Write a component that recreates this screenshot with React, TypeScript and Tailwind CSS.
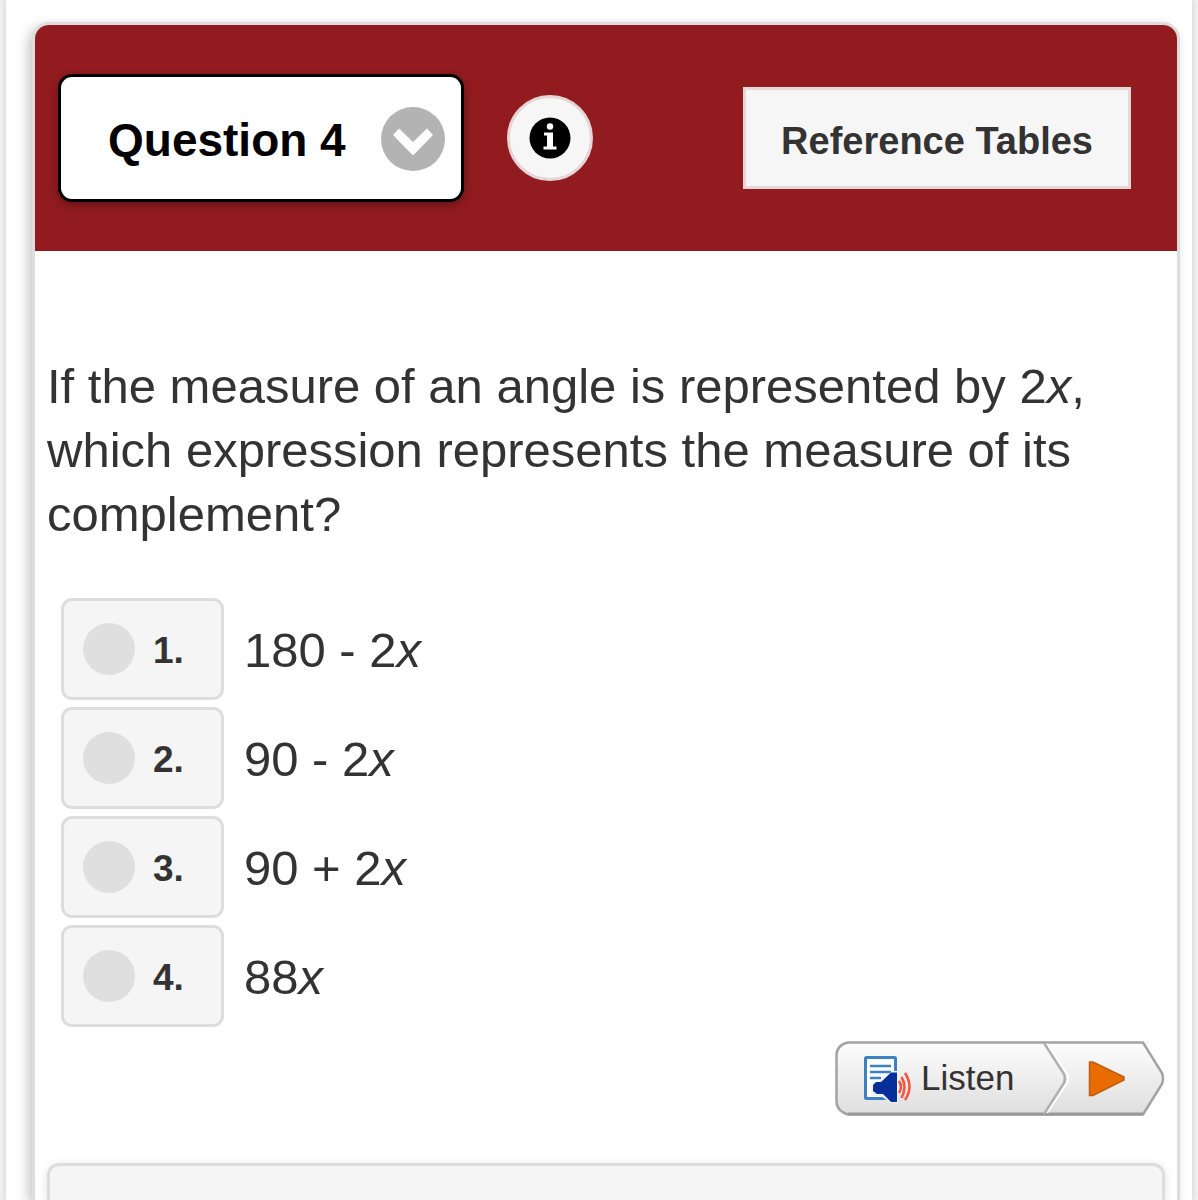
import { useState } from "react";

type Choice = { id: string; label: string; variable: string };

const CHOICES: Choice[] = [
  { id: "1", label: "180 - 2", variable: "x" },
  { id: "2", label: "90 - 2", variable: "x" },
  { id: "3", label: "90 + 2", variable: "x" },
  { id: "4", label: "88", variable: "x" },
];

function InfoIcon() {
  return (
    <svg width="42" height="42" viewBox="0 0 42 42">
      <circle cx="21" cy="21" r="20.500" fill="#000" />
      <circle cx="21" cy="9.500" r="3.200" fill="#fff" />
      <path d="M15 15.500H24V29.500H27.500V32.500H14.500V29.500H18V18.500H15z" fill="#fff" />
    </svg>
  );
}

function QuestionSelect() {
  return (
    <div className="relative">
      <select
        aria-label="Question"
        defaultValue="Question 4"
        className="h-[128px] w-[406px] appearance-none rounded-[14px] border-[3px] border-black bg-white pt-1 pr-28 pl-[47px] text-[46px] font-bold text-black shadow-[0_3px_8px_rgba(0,0,0,0.3)]"
      >
        <option>Question 4</option>
      </select>
      <svg
        viewBox="0 0 64 64"
        className="pointer-events-none absolute top-[33px] right-[19px] h-16 w-16"
      >
        <circle cx="32" cy="32" r="32" fill="#b3b3b3" />
        <path d="M12 28 18 21.500 32 35 46 21.500 52 28 32 48.500z" fill="#fff" />
      </svg>
    </div>
  );
}

function ListenBar() {
  return (
    <div className="relative flex h-[75px] w-[330px] items-stretch">
      <svg viewBox="0 0 330 75" fill="none" className="absolute inset-0 h-full w-full">
        <defs>
          <linearGradient id="bar" x1="0" y1="0" x2="0" y2="1">
            <stop offset="0" stopColor="#fdfdfd" />
            <stop offset="1" stopColor="#dedede" />
          </linearGradient>
        </defs>
        <path
          d="M13 1.500H308L327 32Q329 37.500 327 43L308 73.500H13Q1.500 70 1.500 60V15Q1.500 4 13 1.500z"
          fill="url(#bar)"
          stroke="#a3a3a3"
          strokeWidth="2.500"
        />
        <path d="M13 73H308" stroke="#999" strokeWidth="3" />
        <path d="M212 3 232 33Q234 37.500 232 42L212 72" stroke="#fff" strokeWidth="2" />
        <path d="M209 2 229 33Q231 37.500 229 42L209 73" stroke="#b0b0b0" strokeWidth="2.500" />
      </svg>
      <a
        href="#listen"
        className="relative flex w-[220px] items-center gap-2 pl-7 text-[35px] text-[#333]"
      >
        <svg width="50" height="50" viewBox="0 0 50 50" fill="none" className="shrink-0">
          <rect x="2.500" y="3.500" width="30" height="41" rx="1" fill="#fff" stroke="#3d80c4" strokeWidth="3" />
          <path d="M7 12H28M7 18H28M7 24H18" stroke="#3d80c4" strokeWidth="2.500" />
          <path d="M8 28H18L29 17H35V49H28L18 42H8z" fill="#f3f3f3" />
          <path d="M10 31 13 28H18L28 18.500H34V48H28L20 40H14L10 37z" fill="#062f99" />
          <path d="M36 27Q40 33 36 39M38.500 23Q44.500 33 38.500 44M42 19Q51 33 42 46" stroke="#f5553a" strokeWidth="2.500" />
        </svg>
        Listen
      </a>
      <button type="button" aria-label="Play" className="relative flex-1 pl-8">
        <svg width="38" height="38" viewBox="0 0 38 38">
          <path d="M2.500 2H6L37 17V20L6 35.500H2.500z" fill="#e86c00" stroke="#bd5d14" strokeWidth="1.500" />
        </svg>
      </button>
    </div>
  );
}

export default function App() {
  const [answer, setAnswer] = useState<string | null>(null);

  return (
    <div className="flex h-screen overflow-hidden bg-[#f2f2f2] px-[6px] font-['Liberation_Sans',Arial,sans-serif] text-[#333]">
      <div className="flex min-w-0 flex-1 bg-white pt-[22px] pr-3 pl-[26px] shadow-[0_0_6px_1px_rgba(0,0,0,0.12)]">
        <main className="flex min-w-0 flex-1 flex-col rounded-t-[17px] border-[3px] border-b-0 border-[#ddd] bg-white shadow-[-4px_4px_12px_rgba(0,0,0,0.22)]">
          <header className="flex h-[226px] shrink-0 items-center rounded-t-[14px] bg-[#911b1f] pr-[46px] pl-[23px]">
            <QuestionSelect />
            <button
              type="button"
              aria-label="Information"
              className="ml-[43px] grid h-[86px] w-[86px] place-items-center rounded-full border-[3px] border-[#e5d5d6] bg-[#f6f6f6]"
            >
              <InfoIcon />
            </button>
            <button
              type="button"
              className="ml-auto h-[102px] border-[3px] border-[#e6d7d8] bg-[#f6f6f6] px-[35px] pt-[6px] text-[38px] font-bold whitespace-nowrap"
            >
              Reference Tables
            </button>
          </header>

          <form className="flex min-h-0 flex-1 flex-col px-3 pt-[103px]">
            <p className="text-[49px] leading-[64px]">
              If the measure of an angle is represented by 2<i>x</i>, which
              expression represents the measure of its complement?
            </p>

            <fieldset aria-label="Answer choices" className="mt-[52px] flex flex-col gap-[7px] pl-[14px]">
              {CHOICES.map((c) => (
                <label key={c.id} className="flex h-[102px] items-center gap-5 text-[49px]">
                  <span className="flex h-full w-[163px] items-center gap-[18px] rounded-[11px] border-[3px] border-[#ddd] bg-[#f5f5f5] pl-[19px] text-[37px] font-bold">
                    <input
                      type="radio"
                      name="answer"
                      value={c.id}
                      checked={answer === c.id}
                      onChange={() => setAnswer(c.id)}
                      className="h-[52px] w-[52px] appearance-none rounded-full bg-[#dfdfdf] checked:bg-[#911b1f]"
                    />
                    <span className="pt-1">{c.id}.</span>
                  </span>
                  <span className="pt-1">
                    {c.label}
                    <i>{c.variable}</i>
                  </span>
                </label>
              ))}
            </fieldset>

            <div className="mt-[14px] flex justify-end">
              <ListenBar />
            </div>

            <div className="mt-[47px] flex-1 rounded-t-[12px] border-[3px] border-b-0 border-[#ddd] bg-[#f5f5f5] shadow-[0_2px_10px_rgba(0,0,0,0.12)]" />
          </form>
        </main>
      </div>
    </div>
  );
}
